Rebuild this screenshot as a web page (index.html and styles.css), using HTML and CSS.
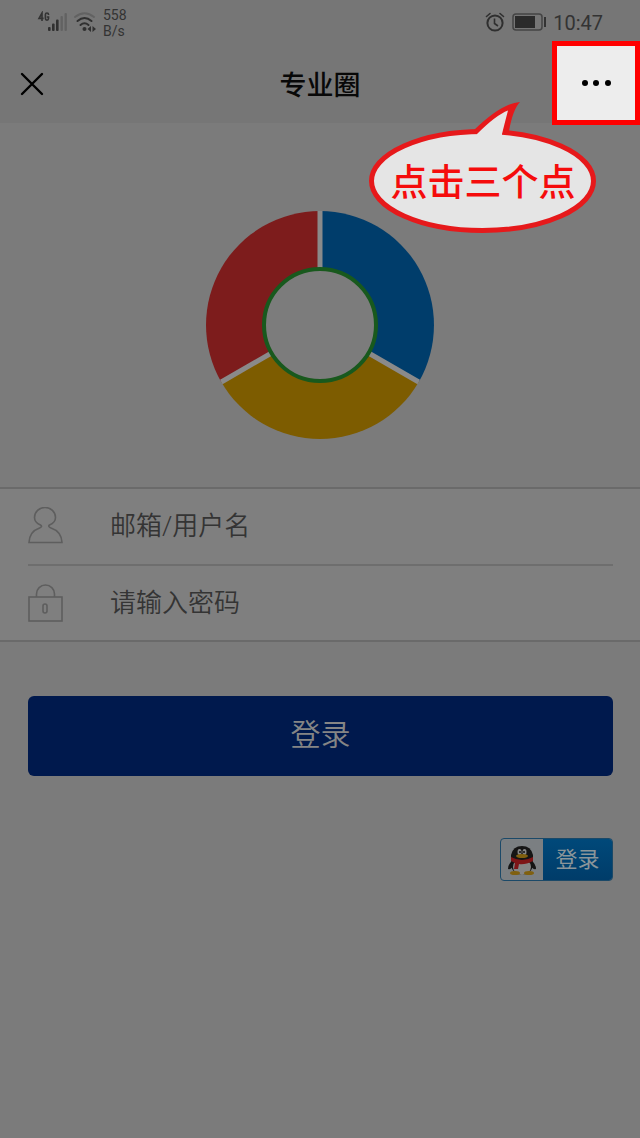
FILE: index.html
```
<!DOCTYPE html>
<html lang="zh-CN">
<head>
  <meta charset="UTF-8">
  <meta name="viewport" content="width=device-width, initial-scale=1.0">
  <title>专业圈</title>
  <link rel="stylesheet" href="styles.css">
</head>
<body>
  <div class="status-bar">
    <div class="status-left">
      <svg class="signal-icon" width="30" height="22" viewBox="0 0 30 22" aria-hidden="true">
        <g fill="none" stroke="#333" stroke-width="1.600">
          <path d="M5 10V2L2 7.400H6.600"/>
          <path d="M11.500 4V3.600Q11.500 2 10 2Q8.400 2 8.400 3.600V7.600Q8.400 9.200 10 9.200Q11.500 9.200 11.500 7.600V6H9.800"/>
        </g>
        <g fill="#303030">
          <rect x="11" y="16" width="2.600" height="4" rx="1"/>
          <rect x="15" y="12.500" width="2.600" height="7.500" rx="1"/>
          <rect x="19" y="8.500" width="2.600" height="11.500" rx="1"/>
        </g>
        <g fill="#626262">
          <rect x="23.500" y="5" width="2.400" height="15" rx="1"/>
          <rect x="27.500" y="2" width="2.400" height="18" rx="1"/>
        </g>
      </svg>
      <svg class="wifi-icon" width="22" height="22" viewBox="0 0 22 22" aria-hidden="true">
        <g fill="none" stroke-width="2" stroke-linecap="round">
          <path d="M1 6Q10.500 -1.500 20 6" stroke="#626262"/>
          <path d="M3.500 10Q10.500 4 17.500 10" stroke="#303030"/>
          <path d="M6.500 14Q10.500 10.500 14.500 14" stroke="#303030"/>
        </g>
        <circle cx="10.500" cy="18" r="2" fill="#303030"/>
        <path d="M17 15V21L13.500 18ZM18.500 15V21L22 18Z" fill="#303030"/>
      </svg>
      <div class="net-speed">558<br>B/s</div>
    </div>
    <div class="status-right">
      <svg width="20" height="20" viewBox="0 0 20 20" fill="none" stroke="#2f2f2f" aria-hidden="true">
        <circle cx="10" cy="11" r="7.600" stroke-width="2"/>
        <path d="M9.500 6.500V11.500L13 14" stroke-width="1.600"/>
        <path d="M1.500 4.500L5 1.500M18.500 4.500L15 1.500" stroke-width="1.600" stroke-linecap="round"/>
      </svg>
      <svg width="34" height="18" viewBox="0 0 34 18" aria-hidden="true">
        <rect x="1" y="1" width="29" height="16" rx="3" fill="none" stroke="#444" stroke-width="1.500"/>
        <rect x="3" y="3" width="20" height="12" fill="#2b2b2b"/>
        <rect x="32" y="4" width="2" height="10" fill="#333"/>
      </svg>
      <span class="clock">10:47</span>
    </div>
  </div>

  <header class="nav-bar">
    <button type="button" class="close-btn" aria-label="关闭">
      <svg width="24" height="24" viewBox="0 0 24 24" aria-hidden="true">
        <path d="M2 2L22 22M22 2L2 22" stroke="#000" stroke-width="2.400" stroke-linecap="round"/>
      </svg>
    </button>
    <h1>专业圈</h1>
    <button type="button" class="more-btn" aria-label="更多">
      <svg width="30" height="8" viewBox="0 0 30 8" aria-hidden="true">
        <circle cx="4" cy="4" r="3"/>
        <circle cx="15" cy="4" r="3"/>
        <circle cx="27" cy="4" r="3"/>
      </svg>
    </button>

    <!-- hint bubble pointing at the menu button -->
    <div class="callout">
      <svg width="230" height="134" viewBox="0 0 230 134" aria-hidden="true">
        <ellipse cx="114.500" cy="81" rx="111" ry="49.500" fill="#e5e5e5" stroke="#e6191b" stroke-width="5"/>
        <path d="M106 30Q134 3 152 2Q145 9 141 31L134 34Z" fill="#e6191b"/>
        <path d="M109 34Q128 15 140 10.500Q138 18 134 34V37H109Z" fill="#e5e5e5"/>
      </svg>
      <span>点击三个点</span>
    </div>
  </header>

  <main>
    <svg class="logo" width="230" height="230" viewBox="0 0 230 230" aria-hidden="true">
      <path d="M115 115V1A114 114 0 0 1 213.700 172Z" fill="#003d6b"/>
      <path d="M115 115L213.700 172A114 114 0 0 1 16.300 172Z" fill="#7d5c00"/>
      <path d="M115 115L16.300 172A114 114 0 0 1 115 1Z" fill="#7d1c1c"/>
      <path d="M115 1V115L213.700 172M115 115L16.300 172" fill="none" stroke="#8a8a8a" stroke-width="5"/>
      <circle cx="115" cy="115" r="56" fill="#7c7c7c" stroke="#18591d" stroke-width="4"/>
    </svg>

    <form>
      <div class="fields">
        <div class="field">
          <label for="username" aria-label="邮箱/用户名">
            <svg width="36" height="38" viewBox="0 0 36 38" fill="none" stroke="#5e5e5e" stroke-width="1.600" aria-hidden="true">
              <path d="M1 35.500H34Q33.500 24.500 23 21Q19.500 19.500 21.500 18Q27.500 15.500 27.500 10.500A10.500 10 0 0 0 6.500 10.500Q6.500 15.500 12.500 18Q15 19.500 11.500 21Q1.500 24.500 1 35.500Z"/>
            </svg>
          </label>
          <input type="text" id="username" name="username" placeholder="邮箱/用户名">
        </div>
        <div class="field">
          <label for="password" aria-label="请输入密码">
            <svg width="36" height="38" viewBox="0 0 36 38" fill="none" stroke="#5e5e5e" stroke-width="1.600" aria-hidden="true">
              <rect x="1" y="13" width="33" height="24"/>
              <path d="M8.500 13V10A9 9 0 0 1 26.500 10V13"/>
              <rect x="15" y="20" width="4" height="9" rx="2"/>
            </svg>
          </label>
          <input type="password" id="password" name="password" placeholder="请输入密码">
        </div>
      </div>

      <div class="actions">
        <button type="submit" class="login-btn">登录</button>
        <a href="#" class="qq-login">
          <svg width="42" height="40" viewBox="0 0 42 40" aria-hidden="true">
            <path d="M12 20Q7 24 7 29Q10 30 13 25ZM30 20Q35 24 35 29Q32 30 29 25Z" fill="#151515"/>
            <ellipse cx="21" cy="24" rx="11" ry="11" fill="#151515"/>
            <ellipse cx="21" cy="27" rx="9" ry="8" fill="#858585"/>
            <ellipse cx="14" cy="33" rx="5" ry="2" fill="#80600f"/>
            <ellipse cx="28" cy="33" rx="5" ry="2" fill="#80600f"/>
            <path d="M10 18V15Q12 6 21 6Q30 6 32 15V18Q21 23 10 18Z" fill="#151515"/>
            <ellipse cx="18.500" cy="12" rx="2" ry="3" fill="#858585"/>
            <ellipse cx="23.500" cy="12" rx="2" ry="3" fill="#858585"/>
            <circle cx="19" cy="12" r="1" fill="#111"/>
            <circle cx="23" cy="12" r="1" fill="#111"/>
            <ellipse cx="21" cy="16" rx="6" ry="2" fill="#80600f"/>
            <path d="M10 17Q21 23 32 17V21Q24 25 18 24L17 29H13L14 23L10 21Z" fill="#7e1517"/>
          </svg>
          <span>登录</span>
        </a>
      </div>
    </form>
  </main>
</body>
</html>
```
FILE: styles.css
```
*, *::before, *::after {
  box-sizing: border-box;
}

body {
  margin: 0;
  min-height: 100vh;
  background-color: #7b7b7b;
  font-family: Roboto, "Noto Sans CJK SC", sans-serif;
}

button {
  padding: 0;
  border: none;
  font-family: inherit;
  cursor: pointer;
}

svg {
  display: block;
}

.status-bar {
  display: flex;
  justify-content: space-between;
  align-items: center;
  height: 44px;
  padding: 0 37px;
  background-color: #767676;
  color: #333;
}

.status-left,
.status-right {
  display: flex;
  align-items: center;
  gap: 7px;
}

.net-speed {
  padding-top: 2px;
  font-size: 14px;
  line-height: 16px;
}

.clock {
  padding-top: 2px;
  font-size: 20px;
  line-height: 24px;
}

.nav-bar {
  position: relative;
  display: flex;
  align-items: center;
  justify-content: center;
  height: 79px;
  background-color: #767676;
}

.nav-bar h1 {
  margin: 0;
  padding-top: 4px;
  font-size: 27px;
  font-weight: 500;
  line-height: 40px;
  color: #080808;
}

.close-btn {
  position: absolute;
  left: 20px;
  background: none;
}

.more-btn {
  position: absolute;
  top: -3px;
  right: 0;
  display: flex;
  align-items: center;
  justify-content: center;
  width: 88px;
  height: 84px;
  background-color: #ededed;
  border: 5px solid #f00;
}

.callout {
  position: absolute;
  top: 56px;
  right: 42px;
}

.callout span {
  position: absolute;
  top: 57px;
  left: 0;
  width: 100%;
  text-align: center;
  font-size: 37px;
  font-weight: 500;
  line-height: 54px;
  color: #f50c0c;
}

main {
  padding-top: 87px;
}

.logo {
  margin: 0 auto 47px;
}

.fields {
  padding: 0 27px 0 28px;
  background-color: #7f7f7f;
  border-top: 2px solid #6a6a6a;
  border-bottom: 2px solid #6a6a6a;
}

.field {
  display: flex;
  align-items: center;
  gap: 46px;
  height: 75px;
  padding-bottom: 1px;
}

.field + .field {
  height: 76px;
  border-top: 2px solid #6e6e6e;
}

.field input {
  flex: 1;
  min-width: 0;
  padding: 0;
  border: none;
  outline: none;
  background: none;
  font-family: inherit;
  font-size: 26px;
  font-weight: 350;
  line-height: 40px;
  color: #222;
}

.field input::placeholder {
  color: #343434;
  opacity: 1;
}

.actions {
  display: flex;
  flex-direction: column;
  align-items: flex-end;
  gap: 62px;
  padding: 54px 27px 54px 28px;
}

.login-btn {
  width: 100%;
  height: 80px;
  padding-bottom: 8px;
  border-radius: 6px;
  background-color: #00194d;
  color: #858585;
  font-size: 30px;
  font-weight: 350;
}

.qq-login {
  display: flex;
  align-items: center;
  height: 43px;
  border: 1px solid #1b4968;
  border-radius: 4px;
  overflow: hidden;
  background-color: #7b7f82;
  text-decoration: none;
}

.qq-login span {
  width: 69px;
  background: linear-gradient(#00497a, #003c69);
  color: #8a9599;
  font-size: 22px;
  line-height: 43px;
  text-align: center;
}
```
